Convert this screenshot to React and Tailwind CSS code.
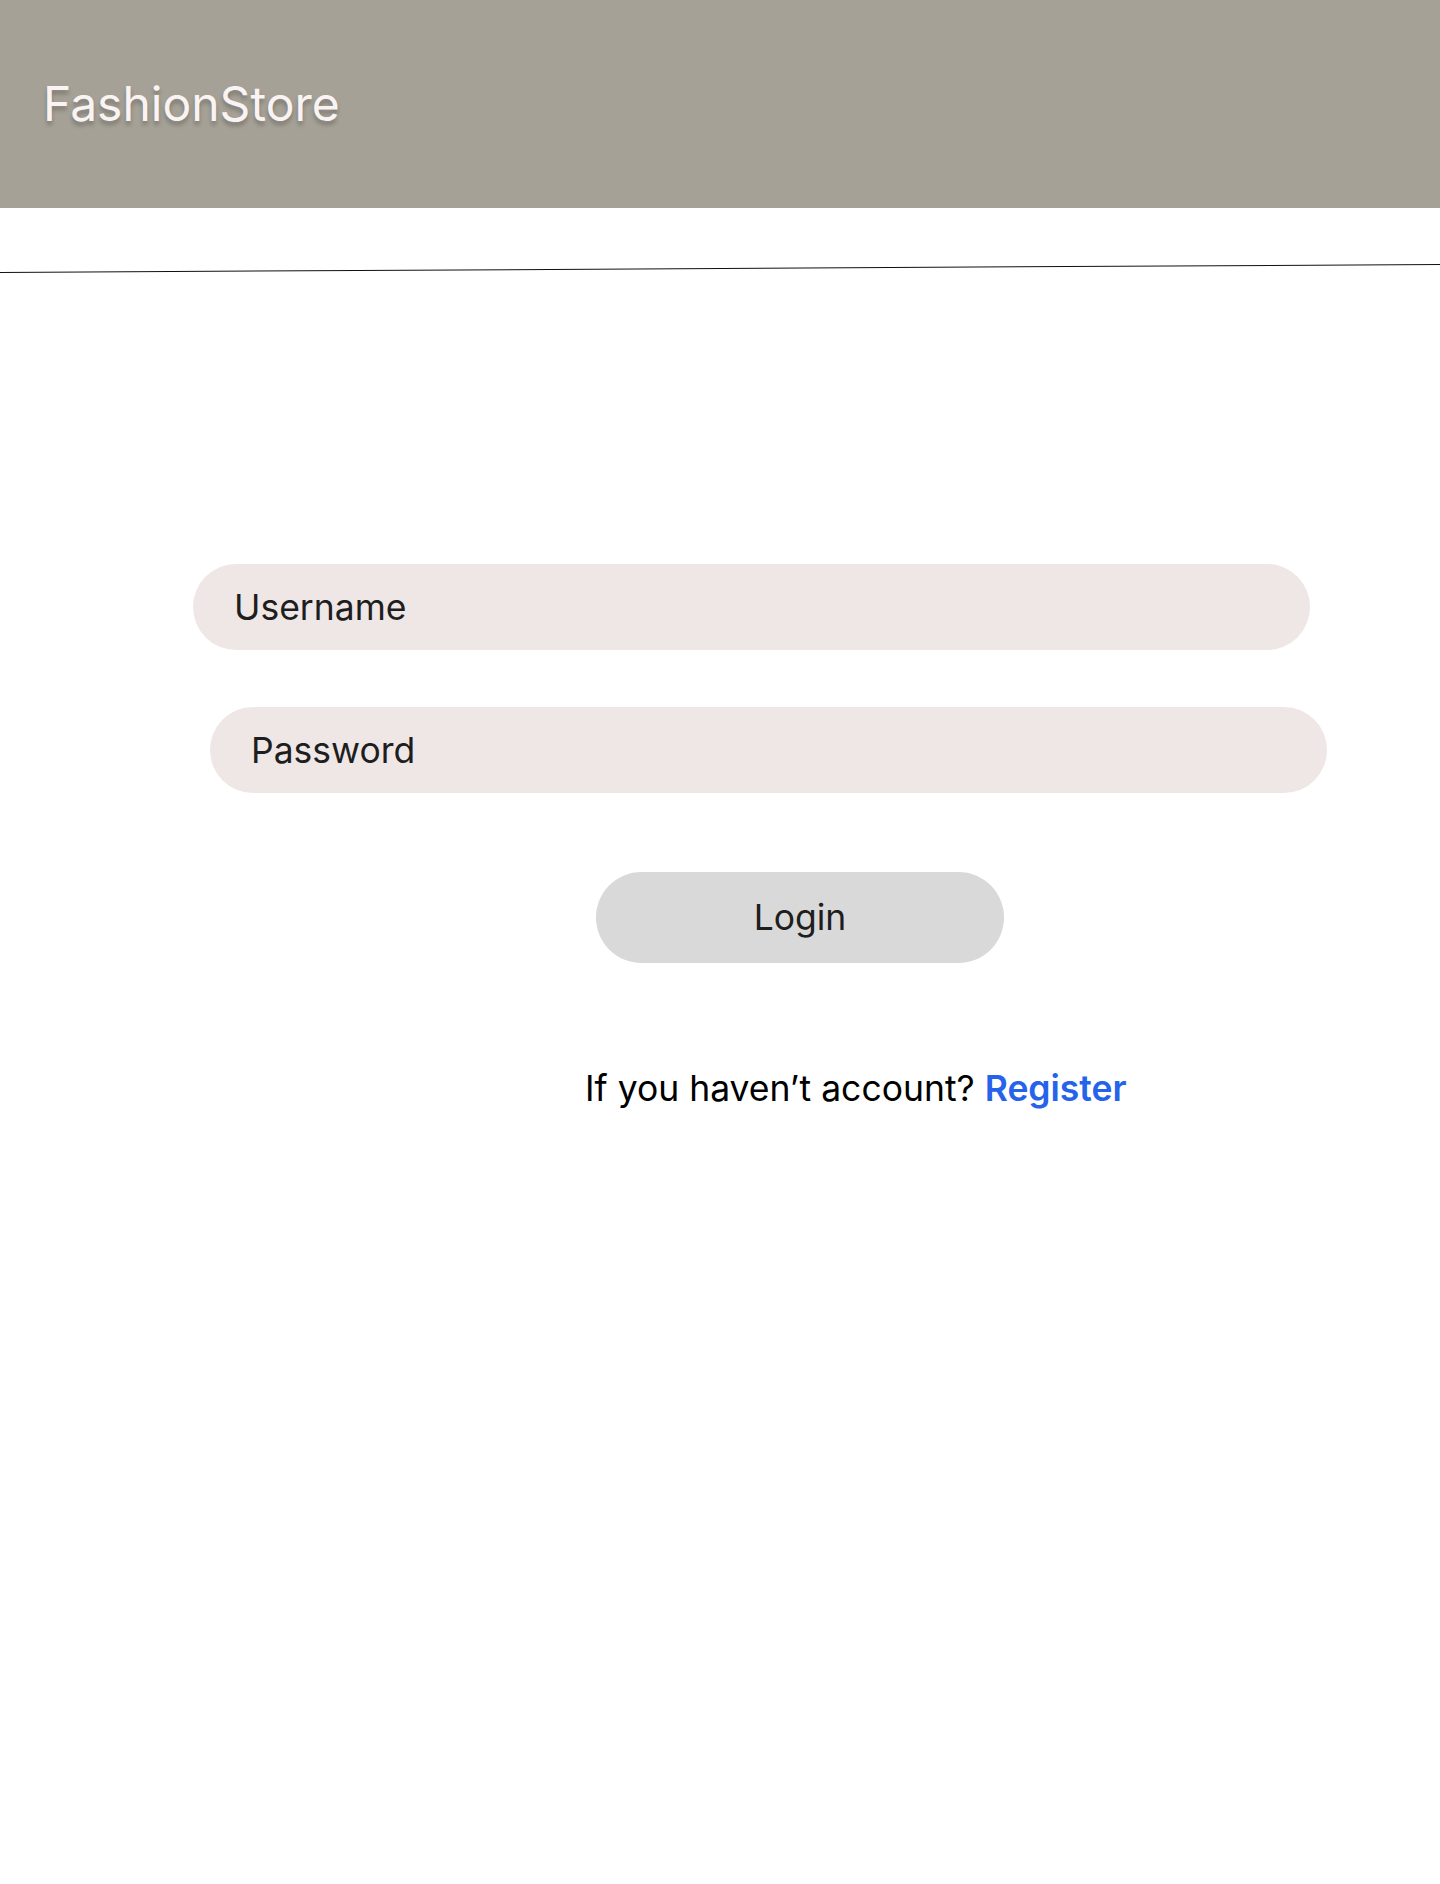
import React from 'react';

export default function App() {
  return (
    <div className="min-h-[1884px] bg-white text-[#1e1e1e] font-['Inter','Noto_Sans',sans-serif]">
      {/* Header */}
      <header className="h-[208px] bg-[#a5a196] flex items-center px-[43px]">
        <h1 className="text-[48px] leading-[58px] font-normal text-[#f9f4f3] [text-shadow:0_4px_4px_rgba(0,0,0,0.25)]">
          FashionStore
        </h1>
      </header>

      {/* Divider */}
      <div className="mt-[60px] border-t border-[#111] -rotate-[0.32deg]" />

      {/* Login form */}
      <form className="flex flex-col pt-[295px]" onSubmit={(e) => e.preventDefault()}>
        <input
          type="text"
          placeholder="Username"
          className="ml-[193px] w-[1117px] h-[86px] rounded-full bg-[#efe7e6] pl-[41px] text-[35.5px] outline-none placeholder:text-[#1e1e1e]"
        />
        <input
          type="password"
          placeholder="Password"
          className="mt-[57px] ml-[210px] w-[1117px] h-[86px] rounded-full bg-[#efe7e6] pl-[41px] text-[35.5px] outline-none placeholder:text-[#1e1e1e]"
        />
        <button
          type="submit"
          className="mt-[79px] ml-[596px] w-[408px] h-[91px] rounded-full bg-[#d9d9d9] text-[35.5px] text-[#1e1e1e]"
        >
          Login
        </button>
        <p className="mt-[99px] ml-[585px] text-[35.5px] text-black">
          If you haven’t account?{' '}
          <a href="#" className="font-semibold text-[#2563eb]">Register</a>
        </p>
      </form>
    </div>
  );
}
